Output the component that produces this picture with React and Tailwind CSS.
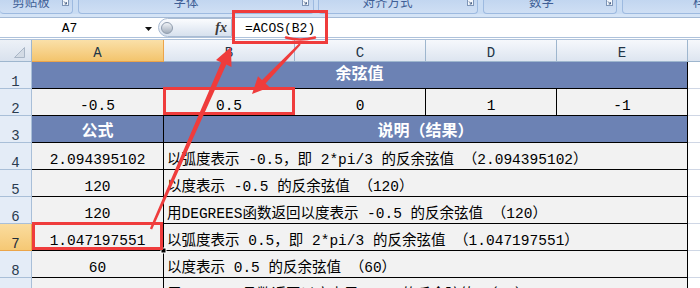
import React from 'react'

const F = "font-['Liberation_Mono','Noto_Sans_CJK_SC',monospace]"
const CJK = "font-['Noto_Sans_CJK_SC',sans-serif]"

const rows = [
  { n: 4, a: '2.094395102', t: '以弧度表示 -0.5，即 2*pi/3 的反余弦值 （2.094395102）' },
  { n: 5, a: '120', t: '以度表示 -0.5 的反余弦值 （120）' },
  { n: 6, a: '120', t: '用DEGREES函数返回以度表示 -0.5 的反余弦值 （120）' },
  { n: 7, a: '1.047197551', t: '以弧度表示 0.5，即 2*pi/3 的反余弦值 （1.047197551）', active: true },
  { n: 8, a: '60', t: '以度表示 0.5 的反余弦值 （60）' },
  { n: 9, a: '60', t: '用DEGREES函数返回以度表示 0.5 的反余弦值 （60）' },
]

function Launcher() {
  return (
    <svg width="7" height="6" viewBox="0 0 7 6" className="shrink-0">
      <rect x="0.5" y="-1" width="6" height="6.5" fill="#f3f7fc" stroke="#7d95b7" />
      <path d="M2 1.5 L4.5 4 M4.5 2.2 V4 H2.7" stroke="#4f6689" fill="none" strokeWidth="1" />
    </svg>
  )
}

function Group({ className, labelClass, label, children }) {
  return (
    <div className={`h-[14px] shrink-0 flex border-x border-b border-[#9dbae0] rounded-b-[4px] bg-linear-to-b from-[#c2d6f0] to-[#cfdff4] ${className}`}>
      <div className={`-mt-[5px] text-center text-[12.5px] leading-[14px] text-[#3f5f96] ${CJK} ${labelClass}`}>{label}</div>
      {children}
    </div>
  )
}

function RowHead({ n, active }) {
  return (
    <div
      className={`w-[32px] shrink-0 flex items-end justify-center border-r border-b text-[14px] leading-[12px] ${
        active
          ? 'bg-linear-to-b from-[#fadc9e] to-[#f5c874] border-[#eba54a] text-[#1d2b3a]'
          : 'bg-[#e4ecf7] border-[#a9bfd8] text-[#2a3b4f]'
      }`}
    >
      {n}
    </div>
  )
}

function Row({ n, active, children }) {
  return (
    <div className={`h-[27px] flex ${F}`}>
      <RowHead n={n} active={active} />
      {children}
      <div className="w-[12px] shrink-0 bg-white border-b border-[#d0d7e5]" />
    </div>
  )
}

function Cell({ className, children }) {
  return (
    <div className={`shrink-0 bg-[#f2f2f2] border-r border-b border-black flex items-end justify-center pb-[1px] text-[14.5px] leading-[16px] text-black ${className}`}>
      {children}
    </div>
  )
}

function ColHead({ className, children }) {
  return (
    <div className={`shrink-0 border-r border-b border-[#9eb6ce] bg-linear-to-b from-[#f6f8fc] to-[#dde5f0] flex items-end justify-center pb-[2px] ${className}`}>
      {children}
    </div>
  )
}

export default function App() {
  return (
    <div className="relative w-[700px] h-[288px] overflow-hidden bg-white">
      {/* ribbon */}
      <div className="h-[14px] flex bg-[#c9dcf3]">
        <Group className="w-[73px] border-l-0" labelClass="w-[62px]" label="剪贴板">
          <Launcher />
        </Group>
        <Group className="ml-[5px] w-[236px]" labelClass="w-[214px]" label="字体">
          <div className="ml-[9px]"><Launcher /></div>
        </Group>
        <Group className="ml-[4px] w-[160px]" labelClass="w-[137px]" label="对齐方式">
          <div className="ml-[11px]"><Launcher /></div>
        </Group>
        <Group className="ml-[5px] w-[134px]" labelClass="w-[115px]" label="数字">
          <div className="ml-[7px]"><Launcher /></div>
        </Group>
        <Group className="ml-[5px] w-[120px]" labelClass="pl-[70px] text-left" label="样式" />
      </div>
      <div className="h-[3px] bg-[#d5e4f6]" />

      {/* formula bar */}
      <div className="h-[20px] flex border-t border-[#a4bad6] bg-white">
        <div className={`w-[139px] shrink-0 text-center pt-[2px] text-[13px] leading-[17px] text-black ${F}`}>A7</div>
        <svg className="ml-[6px] mt-[9px] shrink-0" width="7" height="4" viewBox="0 0 7 4">
          <path d="M0 0H7L3.5 4Z" fill="#111" />
        </svg>
        <div className="ml-[6px] w-[74px] h-[19px] shrink-0 rounded-l-[10px] border border-[#a9bbd2] bg-linear-to-b from-[#fbfcfe] to-[#d7e1ee] flex items-center">
          <div className="ml-[2px] w-[12px] h-[12px] rounded-full border border-[#8f9cad] bg-linear-to-b from-[#f0f3f7] to-[#a3aebc]" />
          <span className="ml-auto mr-[4px] italic font-bold font-['Liberation_Serif',serif] text-[14px] leading-none text-[#3a3a3a]">fx</span>
        </div>
        <div className={`pl-[13px] pt-[2px] text-[13px] leading-[17px] text-black ${F}`}>=ACOS(B2)</div>
      </div>
      <div className="h-[3px] border-y border-[#aec2db] bg-white" />

      {/* column headers */}
      <div className={`h-[22px] flex text-[14px] leading-[12px] text-[#213547] ${F}`}>
        <div className="w-[32px] shrink-0 border-r border-b border-[#9eb6ce] bg-linear-to-b from-[#edf1f7] to-[#d9e2ee] flex items-end justify-end pr-[6px] pb-[3px]">
          <svg width="11" height="11" viewBox="0 0 11 11">
            <path d="M10.5 0.5 V10.5 H0.5 Z" fill="#d3dbe5" stroke="#a9b6c6" />
          </svg>
        </div>
        <div className="w-[132px] shrink-0 border-r border-b border-[#eca44a] bg-linear-to-b from-[#fae0a8] to-[#f3c46c] flex items-end justify-center pb-[2px]">A</div>
        <ColHead className="w-[131px]">B</ColHead>
        <ColHead className="w-[131px]">C</ColHead>
        <ColHead className="w-[131px]">D</ColHead>
        <ColHead className="w-[131px]">E</ColHead>
        <div className="w-[12px] shrink-0 border-b border-[#9eb6ce] bg-linear-to-b from-[#f6f8fc] to-[#dde5f0]" />
      </div>

      {/* sheet */}
      <Row n={1}>
        <div className="w-[656px] shrink-0 bg-[#6c82b4] border-r border-b border-black flex items-center justify-center text-white font-bold text-[16px] leading-[20px]">
          余弦值
        </div>
      </Row>
      <Row n={2}>
        <Cell className="w-[132px]">-0.5</Cell>
        <Cell className="w-[131px]">0.5</Cell>
        <Cell className="w-[131px]">0</Cell>
        <Cell className="w-[131px]">1</Cell>
        <Cell className="w-[131px]">-1</Cell>
      </Row>
      <Row n={3}>
        <div className="w-[132px] shrink-0 bg-[#6c82b4] border-r border-b border-black flex items-center justify-center pt-[5px] text-white font-bold text-[16px] leading-[20px]">
          公式
        </div>
        <div className="w-[524px] shrink-0 bg-[#6c82b4] border-r border-b border-black flex items-center justify-center pt-[5px] text-white font-bold text-[16px] leading-[20px]">
          说明（结果）
        </div>
      </Row>
      {rows.map((r) => (
        <Row key={r.n} n={r.n} active={r.active}>
          <Cell className="w-[132px]">{r.a}</Cell>
          <Cell className="w-[524px] justify-start pl-[3px] whitespace-nowrap">{r.t}</Cell>
        </Row>
      ))}

      {/* annotations */}
      <svg className="absolute inset-0 pointer-events-none" width="700" height="288" viewBox="0 0 700 288">
        <rect x="161" y="248" width="5" height="5" fill="#000" stroke="#fff" strokeWidth="1" />
        <rect x="233.5" y="11.5" width="93" height="31" fill="none" stroke="#ef3c3c" strokeWidth="3" />
        <rect x="164.5" y="88.5" width="129" height="25" fill="none" stroke="#ef3c3c" strokeWidth="3" />
        <rect x="33.5" y="223.5" width="128" height="25" fill="none" stroke="#ef3c3c" strokeWidth="3" />
        <path d="M286 37.5 Q300 41.5 315 37.5" fill="none" stroke="#ef3c3c" strokeWidth="2.5" strokeLinecap="round" />
        <polygon points="300.7,44.7 265.6,83.4 269.6,87.2 252,94 258,76.2 262,80 299.3,43.3" fill="#ef3c3c" />
        <polygon points="152.1,229.5 226.3,64.6 231.5,66.9 231,47 216,60.1 221.2,62.4 149.9,228.5" fill="#ef3c3c" />
      </svg>
    </div>
  )
}
